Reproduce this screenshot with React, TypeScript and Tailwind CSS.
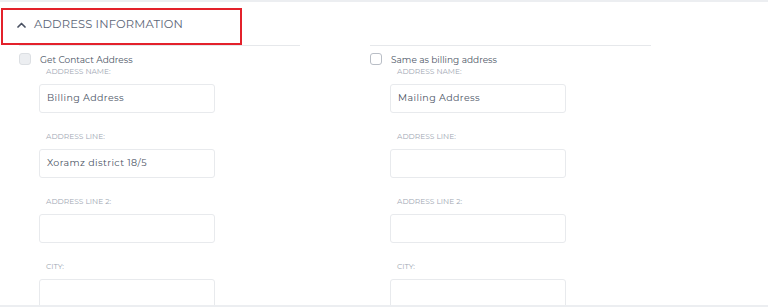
import React from "react";

interface Field {
  label: string;
  value: string;
}

const BILLING: Field[] = [
  { label: "Address Name:", value: "Billing Address" },
  { label: "Address Line:", value: "Xoramz district 18/5" },
  { label: "Address Line 2:", value: "" },
  { label: "City:", value: "" },
];

const MAILING: Field[] = [
  { label: "Address Name:", value: "Mailing Address" },
  { label: "Address Line:", value: "" },
  { label: "Address Line 2:", value: "" },
  { label: "City:", value: "" },
];

const FONT = { fontFamily: "Montserrat, 'Noto Sans', 'Open Sans', sans-serif" };

function AddressColumn({
  checkLabel,
  disabled,
  fields,
}: {
  checkLabel: string;
  disabled?: boolean;
  fields: Field[];
}) {
  return (
    <div className="w-[281px] border-t border-[#e6e8eb] pt-[7px]">
      <label className="flex items-center h-[12px] gap-[9px]">
        <span
          className={
            disabled
              ? "w-[12px] h-[12px] rounded-[3px] border border-[#dcdfe3] bg-[#eceef1]"
              : "w-[12px] h-[12px] rounded-[3px] border border-[#b9bec6] bg-white"
          }
        />
        <span className="text-[9px] leading-[12px] text-[#4d5666] pt-[1px]">{checkLabel}</span>
      </label>
      <div className="pl-[20px] pt-[2px] flex flex-col gap-[19px]">
        {fields.map((f) => (
          <div key={f.label}>
            <div className="pl-[7px] h-[10px] text-[7.5px] leading-[10px] uppercase text-[#a0a7b3]">
              {f.label}
            </div>
            <div className="mt-[7px] w-[176px] h-[29px] rounded-[3px] border border-[#e8eaed] bg-white flex items-center px-[7px] text-[9.5px] tracking-[0.4px] text-[#4d5666]">
              {f.value}
            </div>
          </div>
        ))}
      </div>
    </div>
  );
}

export default function App() {
  return (
    <div className="w-[768px] h-[307px] bg-white overflow-hidden flex flex-col" style={FONT}>
      <div className="h-[2px] bg-[#eceef1] shrink-0" />
      <div className="flex-1 overflow-hidden relative">
        <div className="absolute left-[1px] top-[6px] w-[241px] h-[37px] border-2 border-[#e3212b] z-10 pointer-events-none" />
        <div className="h-[37px] mt-[6px] flex items-center pl-[17px] gap-[8px] pb-[4px]">
          <svg width="9" height="6" viewBox="0 0 9 6" fill="none">
            <polyline
              points="1,5 4.5,1.5 8,5"
              stroke="#4a5262"
              strokeWidth="1.7"
              strokeLinecap="round"
              strokeLinejoin="round"
            />
          </svg>
          <span className="text-[11.5px] tracking-[0.15px] uppercase text-[#5b6577]">
            Address Information
          </span>
        </div>
        <div className="flex gap-[70px] pl-[19px]">
          <AddressColumn checkLabel="Get Contact Address" disabled fields={BILLING} />
          <AddressColumn checkLabel="Same as billing address" fields={MAILING} />
        </div>
      </div>
      <div className="h-[2px] bg-[#eceef1] shrink-0" />
    </div>
  );
}
